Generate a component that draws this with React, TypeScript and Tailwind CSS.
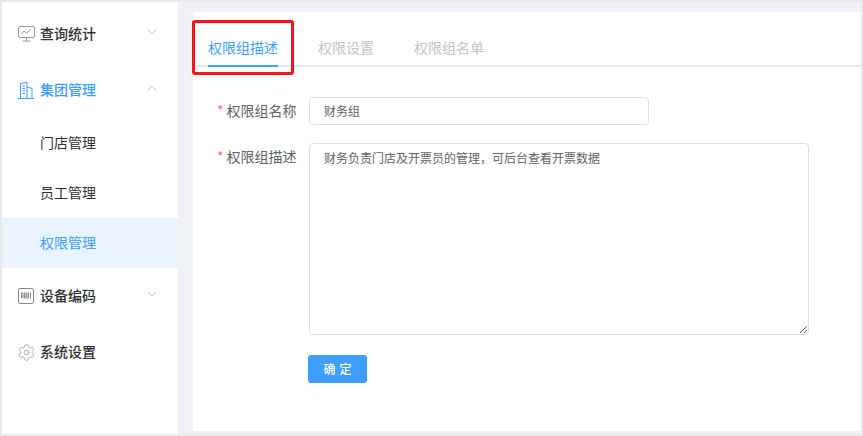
import { ChevronDown, ChevronUp, Settings } from 'lucide-react'
import type { ReactNode } from 'react'

const font = 'font-["Noto_Sans_CJK_SC","Liberation_Sans",sans-serif]'

function MonitorIcon() {
  return (
    <svg width="17" height="16" viewBox="0 0 17 16" fill="none" stroke="#999" strokeWidth="1">
      <rect x="0.5" y="0.5" width="16" height="11" rx="1.500" />
      <path d="M3 8l3-3 2.500 2L13 3.500M8.500 11.500V15M4.500 15h8" />
    </svg>
  )
}

function BuildingIcon() {
  return (
    <svg width="16" height="17" viewBox="0 0 16 17" fill="none" stroke="#409eff" strokeWidth="1">
      <path d="M2.500 16V1.500L9 0.500V16M9 5l5 1.500V16M0 16.500h16M4.500 4h2.500M4.500 6.500h2.500M4.500 9h2.500M4.500 11.500h2.500" />
    </svg>
  )
}

function BarcodeIcon() {
  return (
    <svg width="16" height="16" viewBox="0 0 16 16" fill="none" stroke="#8a8a8a" strokeWidth="1">
      <rect x="0.500" y="0.500" width="15" height="15" rx="1.500" />
      <path d="M3.500 4.500v6M5 4.500v6M6.500 4.500v6M8 4.500v6M9 4.500v6M10.500 4.500v6M12.500 4.500v6" />
    </svg>
  )
}

function MenuRow({ icon, label, active, open }: { icon: ReactNode; label: string; active?: boolean; open?: boolean }) {
  return (
    <div className="flex h-14 items-center pl-4 pr-[19px]">
      <span className="flex w-[22px] shrink-0 justify-start">{icon}</span>
      <span className={`-mt-[1px] text-[14px] font-medium ${active ? 'text-[#409eff]' : 'text-[#303133]'}`}>{label}</span>
      {open === undefined ? null : open ? (
        <ChevronUp className="ml-auto -mt-1 h-[14px] w-[14px] text-[#b4b4b4]" strokeWidth={1.500} />
      ) : (
        <ChevronDown className="ml-auto -mt-1 h-[14px] w-[14px] text-[#b4b4b4]" strokeWidth={1.500} />
      )}
    </div>
  )
}

function SubRow({ label, active }: { label: string; active?: boolean }) {
  return (
    <div className={`flex h-[50px] items-center pb-[2px] pl-[38px] text-[14px] ${active ? 'bg-[#e8f3fe] text-[#409eff]' : 'text-[#303133]'}`}>
      {label}
    </div>
  )
}

export default function App() {
  return (
    <div className={`${font} flex h-[436px] w-[863px] overflow-hidden border-2 border-[#e9e9e9] bg-[#eff1f6]`}>
      {/* Sidebar */}
      <aside className="w-[176px] shrink-0 bg-white pt-1">
        <MenuRow icon={<MonitorIcon />} label="查询统计" open={false} />
        <MenuRow icon={<BuildingIcon />} label="集团管理" active open />
        <SubRow label="门店管理" />
        <SubRow label="员工管理" />
        <SubRow label="权限管理" active />
        <MenuRow icon={<BarcodeIcon />} label="设备编码" open={false} />
        <MenuRow icon={<Settings className="-ml-[1px]" size={19} color="#999" strokeWidth={1} />} label="系统设置" />
      </aside>

      {/* Content */}
      <main className="relative flex-1 pb-[3px] pl-[15px] pt-[10px]">
        <div className="h-full bg-white">
          <div className="flex h-[55px] gap-10 border-b-2 border-[#e4e7ed] pl-[15px] pt-[23px] text-[14px] leading-[24px]">
            <div className="-mb-[2px] w-[70px] border-b-2 border-[#409eff] text-[#409eff]">权限组描述</div>
            <div className="text-[#c4c4c4]">权限设置</div>
            <div className="text-[#c4c4c4]">权限组名单</div>
          </div>

          <div className="pl-[24px] pt-[30px] text-[14px] text-[#606266]">
            <div className="flex items-center">
              <label className="w-[79px] whitespace-nowrap pb-[2px] text-right leading-[26px]">
                <span className="mr-[3px] text-[#f56c6c]">*</span>权限组名称
              </label>
              <div className="ml-[13px] flex h-[28px] w-[340px] items-center rounded border border-[#dcdfe6] pl-[14px] text-[12px]">财务组</div>
            </div>
            <div className="mt-[18px] flex items-start">
              <label className="w-[79px] whitespace-nowrap text-right leading-[26px]">
                <span className="mr-[3px] text-[#f56c6c]">*</span>权限组描述
              </label>
              <textarea
                className="ml-[13px] h-[192px] w-[500px] rounded border border-[#dcdfe6] px-[14px] py-[5px] text-[12px] leading-[18px] text-[#606266] outline-none"
                readOnly
                value="财务负责门店及开票员的管理，可后台查看开票数据"
              />
            </div>
            <button className="ml-[91px] mt-5 block h-[28px] w-[59px] rounded-[3px] bg-[#409eff] pl-1 text-[12px] font-medium tracking-[4px] text-white">确定</button>
          </div>
        </div>

        {/* annotation box over the active tab */}
        <div className="absolute left-[14px] top-[18px] h-[55px] w-[102px] rounded-[3px] border-[3px] border-[#f5141c]" />
      </main>
    </div>
  )
}
